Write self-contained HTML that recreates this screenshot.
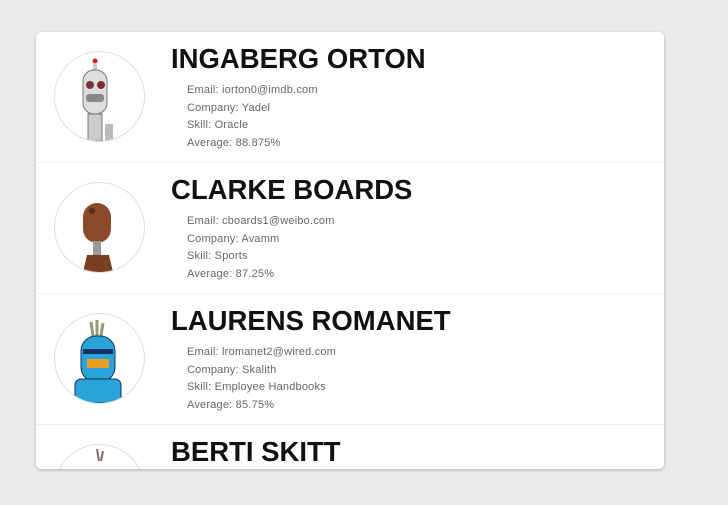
<!DOCTYPE html>
<html><head><style>
html,body{margin:0;background:#ebebeb;width:728px;height:505px;overflow:hidden;font-family:"Liberation Sans",sans-serif}
.card{position:absolute;left:36px;top:32px;width:628px;height:437px;background:#fff;border-radius:5px;box-shadow:0 1px 3px rgba(0,0,0,.25);overflow:hidden}
.row{position:relative;height:130px;border-bottom:1px solid #eee}
.av{position:absolute;left:18px;top:19px;width:89px;height:89px;border:1px solid #ddd;border-radius:50%;overflow:hidden}
.av svg{width:89px;height:89px}
h2{position:absolute;left:135px;top:11px;margin:0;font-size:27.5px;font-weight:bold;color:#111;letter-spacing:0px}
.info{position:absolute;left:151px;top:50px;font-size:11px;line-height:17.5px;color:#666;font-weight:300;letter-spacing:0.2px}
</style></head><body>
<div class="card">
<div class="row"><div class="av"><svg viewBox="0 0 89 89"><circle cx="40" cy="9" r="2.5" fill="#d22"/><rect x="38" y="11" width="4" height="8" fill="#ccc"/><rect x="28" y="18" width="24" height="44" rx="11" fill="#ddd" stroke="#777"/><circle cx="35" cy="33" r="4" fill="#733"/><circle cx="46" cy="33" r="4" fill="#733"/><rect x="31" y="42" width="18" height="8" rx="3" fill="#888"/><rect x="33" y="62" width="14" height="27" fill="#ccc" stroke="#777"/><rect x="50" y="72" width="8" height="17" fill="#bbb"/></svg></div>
<h2>INGABERG ORTON</h2><div class="info">Email: iorton0@imdb.com<br>Company: Yadel<br>Skill: Oracle<br>Average: 88.875%</div></div>
<div class="row"><div class="av"><svg viewBox="0 0 89 89"><rect x="28" y="20" width="28" height="40" rx="14" fill="#8a4a2a"/><circle cx="37" cy="28" r="3" fill="#5a2a12"/><rect x="38" y="58" width="8" height="14" fill="#999"/><path d="M28 89 L32 72 L54 72 L58 89Z" fill="#7a3e22"/></svg></div>
<h2>CLARKE BOARDS</h2><div class="info">Email: cboards1@weibo.com<br>Company: Avamm<br>Skill: Sports<br>Average: 87.25%</div></div>
<div class="row"><div class="av"><svg viewBox="0 0 89 89"><path d="M38 22 L36 8 M42 22 L42 6 M46 22 L48 9" stroke="#997" stroke-width="3"/><rect x="26" y="22" width="34" height="46" rx="15" fill="#2aa3d8" stroke="#135"/><rect x="28" y="35" width="30" height="5" fill="#136"/><rect x="32" y="45" width="22" height="9" fill="#e9a020"/><rect x="20" y="65" width="46" height="24" rx="6" fill="#2aa3d8" stroke="#135"/></svg></div>
<h2>LAURENS ROMANET</h2><div class="info">Email: lromanet2@wired.com<br>Company: Skalith<br>Skill: Employee Handbooks<br>Average: 85.75%</div></div>
<div class="row"><div class="av"><svg viewBox="0 0 89 89"><path d="M44 16 L42 4 M46 16 L48 6" stroke="#866" stroke-width="2"/></svg></div>
<h2>BERTI SKITT</h2></div>
</div>
</body></html>
